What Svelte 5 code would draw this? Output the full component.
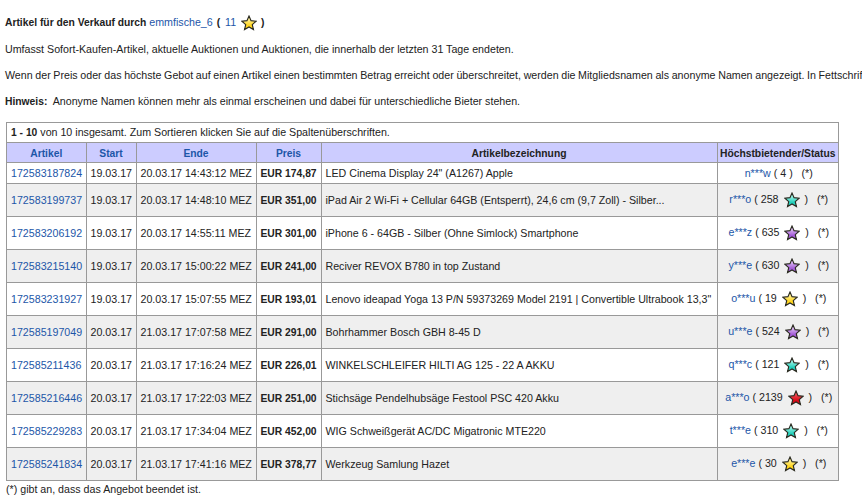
<script>
	const rows = [
		{ id: '172583187824', start: '19.03.17', end: '20.03.17 14:43:12 MEZ', price: 'EUR 174,87', title: 'LED Cinema Display 24" (A1267) Apple', bidder: 'n***w', score: '4', star: null },
		{ id: '172583199737', start: '19.03.17', end: '20.03.17 14:48:10 MEZ', price: 'EUR 351,00', title: 'iPad Air 2 Wi-Fi + Cellular 64GB (Entsperrt), 24,6 cm (9,7 Zoll) - Silber...', bidder: 'r***o', score: '258', star: 'teal' },
		{ id: '172583206192', start: '19.03.17', end: '20.03.17 14:55:11 MEZ', price: 'EUR 301,00', title: 'iPhone 6 - 64GB - Silber (Ohne Simlock) Smartphone', bidder: 'e***z', score: '635', star: 'purple' },
		{ id: '172583215140', start: '19.03.17', end: '20.03.17 15:00:22 MEZ', price: 'EUR 241,00', title: 'Reciver REVOX B780 in top Zustand', bidder: 'y***e', score: '630', star: 'purple' },
		{ id: '172583231927', start: '19.03.17', end: '20.03.17 15:07:55 MEZ', price: 'EUR 193,01', title: 'Lenovo ideapad Yoga 13 P/N 59373269 Model 2191 | Convertible Ultrabook 13,3"', bidder: 'o***u', score: '19', star: 'yellow' },
		{ id: '172585197049', start: '20.03.17', end: '21.03.17 17:07:58 MEZ', price: 'EUR 291,00', title: 'Bohrhammer Bosch GBH 8-45 D', bidder: 'u***e', score: '524', star: 'purple' },
		{ id: '172585211436', start: '20.03.17', end: '21.03.17 17:16:24 MEZ', price: 'EUR 226,01', title: 'WINKELSCHLEIFER HILTI AG 125 - 22 A AKKU', bidder: 'q***c', score: '121', star: 'teal' },
		{ id: '172585216446', start: '20.03.17', end: '21.03.17 17:22:03 MEZ', price: 'EUR 251,00', title: 'Stichsäge Pendelhubsäge Festool PSC 420 Akku', bidder: 'a***o', score: '2139', star: 'red' },
		{ id: '172585229283', start: '20.03.17', end: '21.03.17 17:34:04 MEZ', price: 'EUR 452,00', title: 'WIG Schweißgerät AC/DC Migatronic MTE220', bidder: 't***e', score: '310', star: 'teal' },
		{ id: '172585241834', start: '20.03.17', end: '21.03.17 17:41:16 MEZ', price: 'EUR 378,77', title: 'Werkzeug Samlung Hazet', bidder: 'e***e', score: '30', star: 'yellow' }
	];
	const starPath = 'M9 1.2 L11.3 6.4 L17 7 L12.7 10.8 L14 16.4 L9 13.5 L4 16.4 L5.3 10.8 L1 7 L6.7 6.4 Z';
</script>

<svg class="defs" width="0" height="0" aria-hidden="true">
	<defs>
		<linearGradient id="star-yellow" x1="0" y1="0" x2="0" y2="1"><stop offset="0.2" stop-color="#fff2a0" /><stop offset="0.7" stop-color="#ffd51e" /></linearGradient>
		<linearGradient id="star-teal" x1="0" y1="0" x2="0" y2="1"><stop offset="0.2" stop-color="#a8f5e8" /><stop offset="0.7" stop-color="#24d0bc" /></linearGradient>
		<linearGradient id="star-purple" x1="0" y1="0" x2="0" y2="1"><stop offset="0.2" stop-color="#e0c0f5" /><stop offset="0.7" stop-color="#a45cd8" /></linearGradient>
		<linearGradient id="star-red" x1="0" y1="0" x2="0" y2="1"><stop offset="0.2" stop-color="#f05058" /><stop offset="0.7" stop-color="#d80c18" /></linearGradient>
	</defs>
</svg>

<main>
	<p class="title">
		<b>Artikel für den Verkauf durch</b>
		<a href="#top">emmfische_6</a>
		<b class="paren">(</b>
		<a class="score" href="#top">11</a>
		<svg class="star" viewBox="0 0 18 18"><path d={starPath} fill="url(#star-yellow)" stroke="#2a2a20" stroke-width="1.3" /></svg>
		<b class="close">)</b>
	</p>
	<p>Umfasst Sofort-Kaufen-Artikel, aktuelle Auktionen und Auktionen, die innerhalb der letzten 31 Tage endeten.</p>
	<p class="long">Wenn der Preis oder das höchste Gebot auf einen Artikel einen bestimmten Betrag erreicht oder überschreitet, werden die Mitgliedsnamen als anonyme Namen angezeigt. In Fettschrift angezeigte Gebote</p>
	<p><b>Hinweis:</b>&nbsp; Anonyme Namen können mehr als einmal erscheinen und dabei für unterschiedliche Bieter stehen.</p>

	<div class="box">
		<div class="summary"><b>1 - 10</b> von 10 insgesamt. Zum Sortieren klicken Sie auf die Spaltenüberschriften.</div>
		<table>
			<colgroup>
				<col class="c1" /><col class="c2" /><col class="c3" /><col class="c4" /><col class="c5" /><col />
			</colgroup>
			<thead>
				<tr>
					<th><a href="#top">Artikel</a></th>
					<th><a href="#top">Start</a></th>
					<th><a href="#top">Ende</a></th>
					<th><a href="#top">Preis</a></th>
					<th>Artikelbezeichnung</th>
					<th>Höchstbietender/Status</th>
				</tr>
			</thead>
			<tbody>
				{#each rows as row, i}
					<tr class:odd={i % 2 === 1} class:first={i === 0}>
						<td><a href="#top">{row.id}</a></td>
						<td>{row.start}</td>
						<td>{row.end}</td>
						<td><b>{row.price}</b></td>
						<td>{row.title}</td>
						<td class="bidder">
							<a href="#top">{row.bidder}</a> ( {row.score}
							{#if row.star}
								<svg class="star" viewBox="0 0 18 18"><path d={starPath} fill="url(#star-{row.star})" stroke="#2a2a20" stroke-width="1.3" /></svg>
							{/if}
							)&nbsp;&nbsp; (*)
						</td>
					</tr>
				{/each}
			</tbody>
		</table>
	</div>
	<p class="note">(*) gibt an, dass das Angebot beendet ist.</p>
</main>

<style>
	:global(body) {
		margin: 0;
		background: #fff;
		overflow: hidden;
	}
	.defs {
		position: absolute;
	}
	main {
		width: 862px;
		height: 501px;
		overflow: hidden;
		padding: 15px 0 0 5px;
		box-sizing: border-box;
		font-family: "Liberation Sans", Arial, sans-serif;
		font-size: 10.67px;
		line-height: 13px;
		color: #222;
	}
	b, th {
		font-size: 10.3px;
		font-weight: bold;
	}
	p {
		margin: 0 0 13px;
		white-space: nowrap;
	}
	.title {
		height: 18px;
		margin-bottom: 10px;
	}
	.paren {
		margin-left: 1px;
	}
	.score {
		margin-left: 2px;
	}
	.close {
		margin-left: -1px;
	}
	.long {
		word-spacing: -0.3px;
	}
	a {
		color: #1c56a8;
		text-decoration: none;
	}
	.star {
		width: 16px;
		height: 16px;
		vertical-align: middle;
		margin: 0 2px;
	}
	.box {
		width: 833px;
		box-sizing: border-box;
		border: 1px solid #999;
		margin: 14px 0 0 1px;
	}
	.summary {
		padding: 3px 4px;
		height: 13px;
	}
	table {
		width: 100%;
		table-layout: fixed;
		border-collapse: collapse;
	}
	.c1 { width: 79px; }
	.c2 { width: 50px; }
	.c3 { width: 120px; }
	.c4 { width: 65px; }
	.c5 { width: 396px; }
	th, td {
		border: 1px solid #999;
		padding: 0 4px;
		white-space: nowrap;
		overflow: hidden;
	}
	th {
		background: #ccccff;
		height: 18px;
		padding: 1px 0 0;
		text-align: center;
	}
	td {
		height: 32px;
	}
	tr.first td {
		height: 20px;
	}
	tr.odd td {
		background: #efefef;
	}
	tr > :first-child {
		border-left: 0;
	}
	tr > :last-child {
		border-right: 0;
	}
	tbody tr:last-child td {
		border-bottom: 0;
	}
	.bidder {
		text-align: center;
		padding: 0 0 0 2px;
	}
	.note {
		margin: 2px 0 0 1px;
	}
</style>
